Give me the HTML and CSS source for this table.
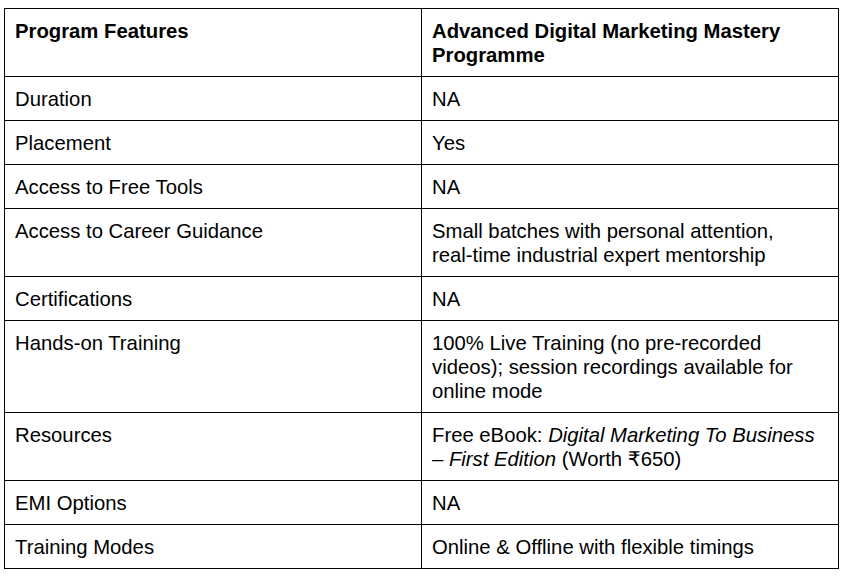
FILE: index.html
```html
<!DOCTYPE html>
<html lang="en">
<head>
<meta charset="utf-8">
<title>Program Features</title>
<link rel="stylesheet" href="styles.css">
</head>
<body>
<table class="features">
  <colgroup><col class="col-half"><col class="col-half"></colgroup>
  <thead>
    <tr><th>Program Features</th><th>Advanced Digital Marketing Mastery Programme</th></tr>
  </thead>
  <tbody>
    <tr><td>Duration</td><td>NA</td></tr>
    <tr><td>Placement</td><td>Yes</td></tr>
    <tr><td>Access to Free Tools</td><td>NA</td></tr>
    <tr><td>Access to Career Guidance</td><td>Small batches with personal attention, <span class="nowrap">real-time</span> industrial expert mentorship</td></tr>
    <tr><td>Certifications</td><td>NA</td></tr>
    <tr><td>Hands-on Training</td><td>100% Live Training (no <span class="nowrap">pre-recorded</span> videos); session recordings available for online mode</td></tr>
    <tr><td>Resources</td><td>Free eBook: <em>Digital Marketing To Business <span class="nowrap">– First</span> Edition</em> (Worth ₹650)</td></tr>
    <tr><td>EMI Options</td><td>NA</td></tr>
    <tr><td>Training Modes</td><td>Online &amp; Offline with flexible timings</td></tr>
  </tbody>
</table>
</body>
</html>
```

FILE: styles.css
```css
html, body {
  background: #fff;
}
body {
  margin: 8px 0 0 4px;
  font-family: "Liberation Sans", Arial, "DejaVu Sans", sans-serif;
  color: #000;
}
.features {
  border-collapse: collapse;
  width: 835px;
  table-layout: fixed;
  font-size: 20.3px;
  line-height: 24px;
}
.col-half {
  width: 50%;
}
.features th,
.features td {
  border: 1px solid #000;
  padding: 10px 10px 9px 10px;
  text-align: left;
  vertical-align: top;
}
.features th {
  font-weight: bold;
}
.features em {
  font-style: italic;
}
.nowrap {
  white-space: nowrap;
}
```
